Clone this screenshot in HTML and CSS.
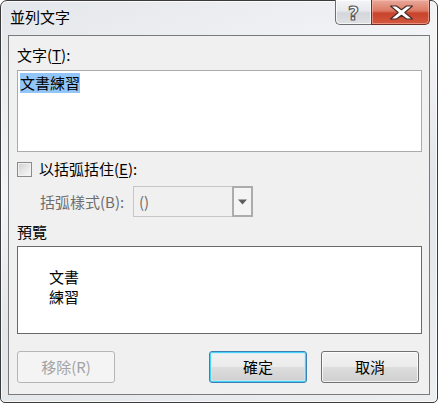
FILE: index.html
```html
<!DOCTYPE html>
<html>
<head>
<meta charset="utf-8">
<link rel="stylesheet" href="styles.css">
</head>
<body>
<div class="window">
  <div class="titlebar">
    <div class="title">並列文字</div>
    <div class="caption">
      <div class="cbtn help">
        <svg width="35" height="25" viewBox="0 0 35 25"><text x="17.5" y="20" text-anchor="middle" font-family="DejaVu Sans" font-weight="bold" font-size="19" fill="#fff" stroke="#5a5a5a" stroke-width="1.2">?</text></svg>
      </div>
      <div class="cbtn close">
        <svg width="59" height="25" viewBox="0 0 59 25"><path d="M18.5 6H24.5L29.5 9.8L34.5 6H40.5L32.8 12.5L40.5 19H34.5L29.5 15.2L24.5 19H18.5L26.2 12.5Z" fill="#fff" stroke="#4a2a26" stroke-width="1.1" stroke-linejoin="round"/></svg>
      </div>
    </div>
  </div>
  <div class="client">
    <div class="lbl first">文字(<u>T</u>):</div>
    <div class="textbox"><span class="sel">文書練習</span></div>
    <div class="checkrow"><span class="check"></span><span class="checklbl">以括弧括住(<u>E</u>):</span></div>
    <div class="comborow">
      <span class="dislbl">括弧樣式(B):</span>
      <div class="combo">
        <span class="val">()</span>
        <span class="drop"><svg width="9" height="6" viewBox="0 0 9 6"><path d="M0 0.5H9L4.5 5.5Z" fill="#5e5e5e"/></svg></span>
      </div>
    </div>
    <div class="lbl prevlbl">預覽</div>
    <div class="preview">
      <div class="pline">文書</div>
      <div class="pline">練習</div>
    </div>
    <div class="buttons">
      <div class="btn disabled">移除(R)</div>
      <div class="btn default">確定</div>
      <div class="btn cancel">取消</div>
    </div>
  </div>
</div>
</body>
</html>
```
FILE: styles.css
```css
* { box-sizing: border-box; }
html, body { margin: 0; padding: 0; }
body {
  width: 438px;
  height: 403px;
  overflow: hidden;
  background: #ffffff;
  font-family: "Noto Sans CJK TC", "Noto Sans", sans-serif;
  font-size: 15px;
  color: #000;
}
.window {
  width: 438px;
  height: 403px;
  border: 1px solid #3b3b3b;
  border-radius: 7px 7px 5px 5px;
  background: linear-gradient(160deg, #e4e7eb 0%, #f3f4f6 35%, #e2e5e9 60%, #eceef0 100%);
  box-shadow: inset 0 0 0 1px rgba(255,255,255,0.75);
  display: flex;
  flex-direction: column;
}
.titlebar {
  height: 34px;
  display: flex;
  justify-content: space-between;
  align-items: flex-start;
  padding: 0 7px 0 9px;
}
.title {
  margin-top: 7px;
  line-height: 18px;
  font-size: 15px;
}
.caption {
  display: flex;
  margin-top: -1px;
  height: 25px;
}
.cbtn {
  height: 25px;
  border: 1px solid #6e6e6e;
  border-top: none;
}
.cbtn svg { display: block; }
.help {
  width: 36px;
  border-radius: 0 0 0 5px;
  border-right: none;
  background: linear-gradient(to bottom, #f4f5f7 0%, #e6e8eb 45%, #d3d6da 55%, #dfe2e5 100%);
  box-shadow: inset 0 0 0 1px rgba(255,255,255,0.7);
}
.close {
  width: 59px;
  border-color: #6e2f24;
  border-radius: 0 0 5px 0;
  background: linear-gradient(to bottom, #e9aa9b 0%, #dc7a64 45%, #c7432c 55%, #d4583f 100%);
  box-shadow: inset 0 0 0 1px rgba(255,200,190,0.5);
}
.client {
  flex: 1;
  margin: 0 7px 7px 7px;
  border: 1px solid #7a7a7a;
  background: #f0f0f0;
  padding: 0 7px 0 8px;
  display: flex;
  flex-direction: column;
}
.lbl {
  line-height: 18px;
  height: 18px;
}
.lbl u { text-decoration-thickness: 1px; text-underline-offset: 2px; }
.first { margin-top: 10px; }
.textbox {
  margin-top: 6px;
  width: 405px;
  height: 82px;
  border: 1px solid #ababab;
  background: #fff;
  padding: 2px 0 0 2px;
  line-height: 20px;
}
.sel {
  background: #93c6f8;
  display: inline-block;
  line-height: 20px;
  font-size: 15px;
}
.checkrow {
  margin-top: 8px;
  height: 18px;
  display: flex;
  align-items: center;
  line-height: 18px;
}
.check {
  width: 15px;
  height: 15px;
  margin-left: 0;
  border: 1px solid #8a8a8a;
  background: linear-gradient(135deg, #cfcfcf 0%, #e6e6e6 50%, #f8f8f8 100%);
  box-shadow: inset 0 0 0 1px #f2f2f2;
}
.checklbl { margin-left: 7px; }
.checklbl u { text-underline-offset: 2px; }
.comborow {
  margin-top: 8px;
  height: 31px;
  display: flex;
  align-items: center;
  padding-left: 23px;
}
.dislbl {
  width: 93px;
  color: #6d6d6d;
  line-height: 18px;
}
.combo {
  width: 120px;
  height: 31px;
  display: flex;
  border: 1px solid #c6c6c6;
  border-right: none;
  background: #f0f0f0;
}
.val {
  flex: 1;
  color: #6d6d6d;
  line-height: 29px;
  padding-left: 5px;
}
.drop {
  width: 21px;
  height: 31px;
  margin-top: -1px;
  border: 2px solid #acacac;
  background: #f4f4f4;
  display: flex;
  align-items: center;
  justify-content: center;
}
.prevlbl { margin-top: 6px; }
.preview {
  margin-top: 5px;
  width: 405px;
  height: 88px;
  border: 1px solid #6a6a6a;
  background: #fff;
  padding: 20px 0 0 31px;
  font-size: 15px;
}
.pline {
  height: 20px;
  line-height: 20px;
}
.buttons {
  margin-top: 17px;
  height: 32px;
  display: flex;
}
.btn {
  width: 98px;
  height: 32px;
  border: 1px solid #707070;
  border-radius: 3px;
  display: flex;
  align-items: center;
  justify-content: center;
  line-height: 18px;
  background: linear-gradient(to bottom, #f2f2f2 0%, #ebebeb 49%, #dddddd 51%, #cfcfcf 100%);
  box-shadow: inset 0 0 0 1px rgba(255,255,255,0.75);
}
.disabled {
  border-color: #b5b5b5;
  background: #f4f4f4;
  color: #a3a3a3;
  box-shadow: none;
}
.default {
  margin-left: 94px;
  border-color: #3c7fb1;
  box-shadow: inset 0 0 0 1px #48d2f8, inset 0 0 0 2px rgba(190,235,252,0.6);
}
.cancel { margin-left: 14px; }
```
